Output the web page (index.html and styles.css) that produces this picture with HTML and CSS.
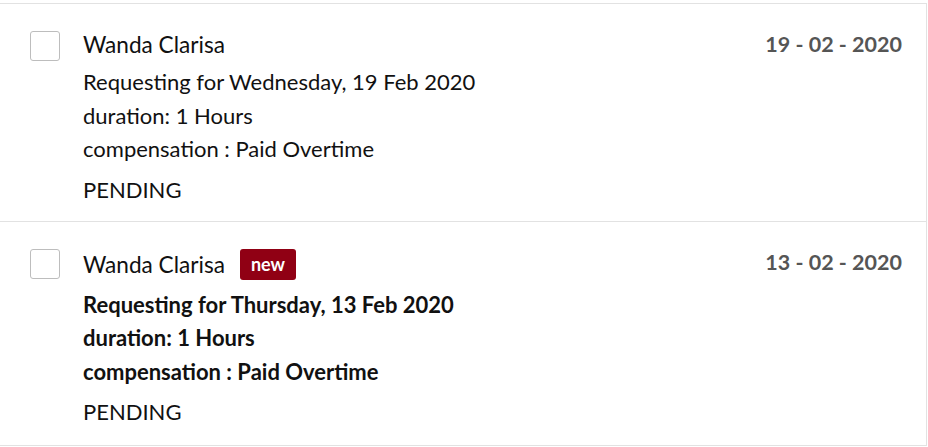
FILE: index.html
```html
<!DOCTYPE html>
<html>
<head>
<meta charset="utf-8">
<link rel="stylesheet" href="styles.css">
</head>
<body>
<div class="list">
  <div class="item">
    <div class="check"></div>
    <div class="content">
      <div class="head"><span class="name">Wanda Clarisa</span></div>
      <div class="details">
        <div>Requesting for Wednesday, 19 Feb 2020</div>
        <div>duration: 1 Hours</div>
        <div>compensation : Paid Overtime</div>
      </div>
      <div class="status">PENDING</div>
    </div>
    <div class="date">19 - 02 - 2020</div>
  </div>
  <div class="item unread">
    <div class="check"></div>
    <div class="content">
      <div class="head"><span class="name">Wanda Clarisa</span><span class="badge">new</span></div>
      <div class="details">
        <div>Requesting for Thursday, 13 Feb 2020</div>
        <div>duration: 1 Hours</div>
        <div>compensation : Paid Overtime</div>
      </div>
      <div class="status">PENDING</div>
    </div>
    <div class="date">13 - 02 - 2020</div>
  </div>
</div>
</body>
</html>
```
FILE: styles.css
```css
html, body {
  margin: 0;
  padding: 0;
  background: #fff;
}
body {
  font-family: Lato, "Noto Sans", sans-serif;
  color: #111;
  padding-top: 3px;
}
.list {
  width: 927px;
  border-top: 1px solid #e2e2e2;
  border-right: 1px solid #e2e2e2;
  box-sizing: border-box;
}
.item {
  display: flex;
  align-items: flex-start;
  padding: 27px 24px 15px 30px;
  border-bottom: 1px solid #e2e2e2;
}
.item.unread {
  padding-bottom: 17px;
}
.check {
  width: 28px;
  height: 28px;
  border: 1px solid #bdbdbd;
  border-radius: 3px;
  flex: none;
}
.content {
  flex: 1;
  margin-left: 23px;
  font-size: 22px;
}
.head {
  display: flex;
  align-items: center;
  min-height: 27px;
  line-height: 27px;
}
.name {
  font-size: 22.6px;
}
.badge {
  margin-left: 15px;
  background: #900014;
  color: #fff;
  font-weight: 700;
  font-size: 18px;
  padding: 0 11px;
  height: 31px;
  line-height: 31px;
  border-radius: 3px;
}
.details {
  margin-top: 7px;
  line-height: 33.5px;
}
.unread .details {
  margin-top: 8px;
  font-weight: 700;
}
.status {
  margin-top: 7px;
  line-height: 33px;
}
.date {
  font-size: 21.5px;
  font-weight: 700;
  color: #555;
  line-height: 27px;
}
```
